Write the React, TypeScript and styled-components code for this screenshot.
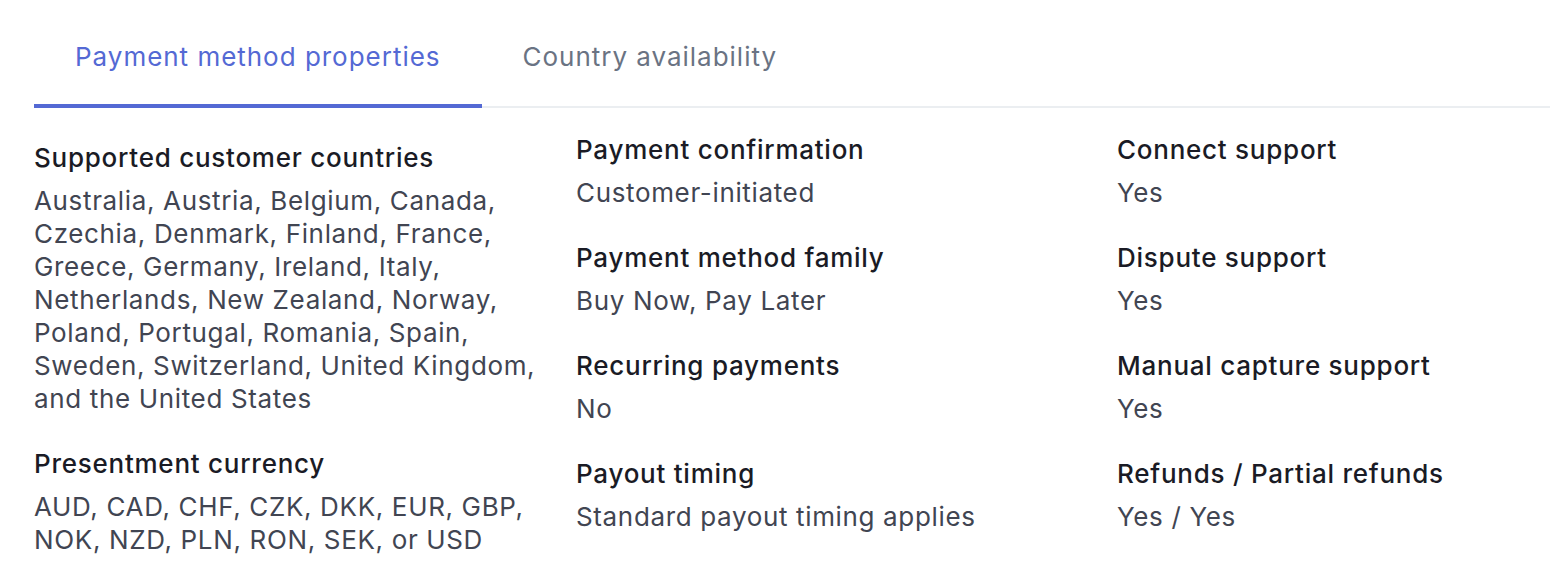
import React, { useState } from 'react';
import styled, { createGlobalStyle } from 'styled-components';

const GlobalStyle = createGlobalStyle`
  html, body {
    margin: 0;
    padding: 0;
    background: #ffffff;
    overflow: hidden;
  }
  body {
    font-family: Inter, "Noto Sans", "Liberation Sans", sans-serif;
    -webkit-font-smoothing: antialiased;
  }
`;

const Page = styled.div`
  padding-left: 34px;
`;

const TabList = styled.div`
  display: flex;
  border-bottom: 2px solid #ebeef1;
`;

const Tab = styled.button<{ $active: boolean }>`
  background: none;
  border: none;
  border-bottom: 4px solid ${p => (p.$active ? '#5469d4' : 'transparent')};
  margin-bottom: -2px;
  padding: 40px 41px 31px 41px;
  font-family: inherit;
  font-size: 26px;
  line-height: 33px;
  letter-spacing: 0.98px;
  font-weight: 400;
  color: ${p => (p.$active ? '#5469d4' : '#6a7383')};
  cursor: pointer;
`;

const Columns = styled.div`
  display: grid;
  grid-template-columns: 542px 541px 1fr;
  margin-top: 25px;
`;

const Column = styled.div<{ $offset?: number }>`
  display: flex;
  flex-direction: column;
  gap: 32px;
  padding-top: ${p => p.$offset || 0}px;
  padding-right: 4px;
`;

const Property = styled.div`
  display: flex;
  flex-direction: column;
  gap: 10px;
`;

const Label = styled.div`
  font-size: 26px;
  line-height: 33px;
  letter-spacing: 0.75px;
  font-weight: 500;
  color: #1a1b25;
`;

const Value = styled.div`
  font-size: 26px;
  line-height: 33px;
  letter-spacing: 0.65px;
  font-weight: 400;
  color: #414552;
`;

type Prop = { label: string; value: string };

const columns: { offset?: number; items: Prop[] }[] = [
  {
    offset: 8,
    items: [
      {
        label: 'Supported customer countries',
        value:
          'Australia, Austria, Belgium, Canada, Czechia, Denmark, Finland, France, Greece, Germany, Ireland, Italy, Netherlands, New Zealand, Norway, Poland, Portugal, Romania, Spain, Sweden, Switzerland, United Kingdom, and the United States',
      },
      {
        label: 'Presentment currency',
        value: 'AUD, CAD, CHF, CZK, DKK, EUR, GBP, NOK, NZD, PLN, RON, SEK, or USD',
      },
    ],
  },
  {
    items: [
      { label: 'Payment confirmation', value: 'Customer-initiated' },
      { label: 'Payment method family', value: 'Buy Now, Pay Later' },
      { label: 'Recurring payments', value: 'No' },
      { label: 'Payout timing', value: 'Standard payout timing applies' },
    ],
  },
  {
    items: [
      { label: 'Connect support', value: 'Yes' },
      { label: 'Dispute support', value: 'Yes' },
      { label: 'Manual capture support', value: 'Yes' },
      { label: 'Refunds / Partial refunds', value: 'Yes / Yes' },
    ],
  },
];

const tabs = ['Payment method properties', 'Country availability'];

export default function App() {
  const [active, setActive] = useState(0);

  return (
    <Page>
      <GlobalStyle />
      <TabList>
        {tabs.map((t, i) => (
          <Tab key={t} $active={i === active} onClick={() => setActive(i)}>
            {t}
          </Tab>
        ))}
      </TabList>
      <Columns>
        {columns.map((col, i) => (
          <Column key={i} $offset={col.offset}>
            {col.items.map(item => (
              <Property key={item.label}>
                <Label>{item.label}</Label>
                <Value>{item.value}</Value>
              </Property>
            ))}
          </Column>
        ))}
      </Columns>
    </Page>
  );
}
